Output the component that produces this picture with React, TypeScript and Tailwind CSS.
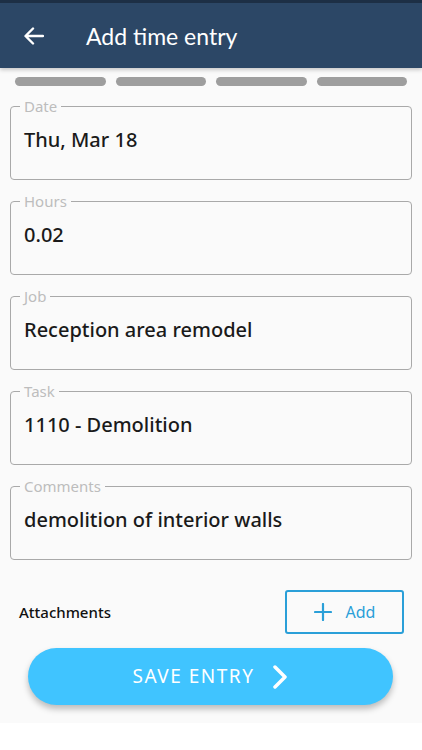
import React from "react";

function Field({ label, value }: { label: string; value: string }) {
  return (
    <fieldset className="mx-[10px] h-[83px] rounded-[4px] border border-[#a9a9a9] px-[9px]">
      <legend className="px-[4px] text-[15px] leading-[18px] text-[#bdbdbd]">{label}</legend>
      <div className="pl-[4px] pt-[11px] text-[20px] font-medium leading-[28px] text-[#1a1a1a]">{value}</div>
    </fieldset>
  );
}

export default function App() {
  return (
    <div className="flex h-[750px] w-[422px] flex-col bg-white" style={{ fontFamily: '"Noto Sans", sans-serif' }}>
      <div className="flex h-[723px] flex-col bg-[#fafafa]">
        <div className="relative z-10 flex h-[68px] items-center border-t-[3px] border-[#1d2f45] bg-[#2c4766] shadow-[0_2px_4px_rgba(0,0,0,0.2)]">
          <svg width="20" height="18" viewBox="0 0 20 18" className="ml-[24px]" fill="none" stroke="white" strokeWidth="2.4" strokeLinecap="round" strokeLinejoin="round">
            <path d="M19 9H2M9 1.5 1.5 9 9 16.5" />
          </svg>
          <div className="ml-[42px] text-[23px] leading-[28px] text-white" style={{ fontFamily: 'Lato, "Noto Sans", sans-serif' }}>
            Add time entry
          </div>
        </div>
        <div className="mx-[15px] mt-[9px] grid grid-cols-4 gap-[10px]">
          <div className="h-[9px] rounded-full bg-[#9e9e9e]" />
          <div className="h-[9px] rounded-full bg-[#9e9e9e]" />
          <div className="h-[9px] rounded-full bg-[#9e9e9e]" />
          <div className="h-[9px] rounded-full bg-[#9e9e9e]" />
        </div>
        <div className="mt-[11px] flex flex-col gap-[12px]">
          <Field label="Date" value="Thu, Mar 18" />
          <Field label="Hours" value="0.02" />
          <Field label="Job" value="Reception area remodel" />
          <Field label="Task" value="1110 - Demolition" />
          <Field label="Comments" value="demolition of interior walls" />
        </div>
        <div className="mt-[30px] flex items-center justify-between pl-[19px] pr-[18px]">
          <div className="text-[15px] font-medium text-[#111]">Attachments</div>
          <button className="flex h-[44px] w-[119px] items-center justify-center gap-[14px] rounded-[3px] border-2 border-[#2a9fd8] text-[16px] text-[#2a9fd8]">
            <svg width="18" height="18" viewBox="0 0 18 18" fill="none" stroke="#2a9fd8" strokeWidth="2.2" strokeLinecap="round">
              <path d="M9 1v16M1 9h16" />
            </svg>
            <span>Add</span>
          </button>
        </div>
        <button className="mx-[28px] mt-[14px] flex h-[57px] w-[365px] items-center justify-center gap-[18px] rounded-full bg-[#40c4ff] text-[19px] tracking-[1.5px] text-white shadow-[0_4px_6px_rgba(0,0,0,0.25)]">
          <span>SAVE ENTRY</span>
          <svg width="16" height="24" viewBox="0 0 16 24" fill="none" stroke="white" strokeWidth="3.5" strokeLinecap="round" strokeLinejoin="round">
            <path d="M3 2l10 10L3 22" />
          </svg>
        </button>
      </div>
    </div>
  );
}
